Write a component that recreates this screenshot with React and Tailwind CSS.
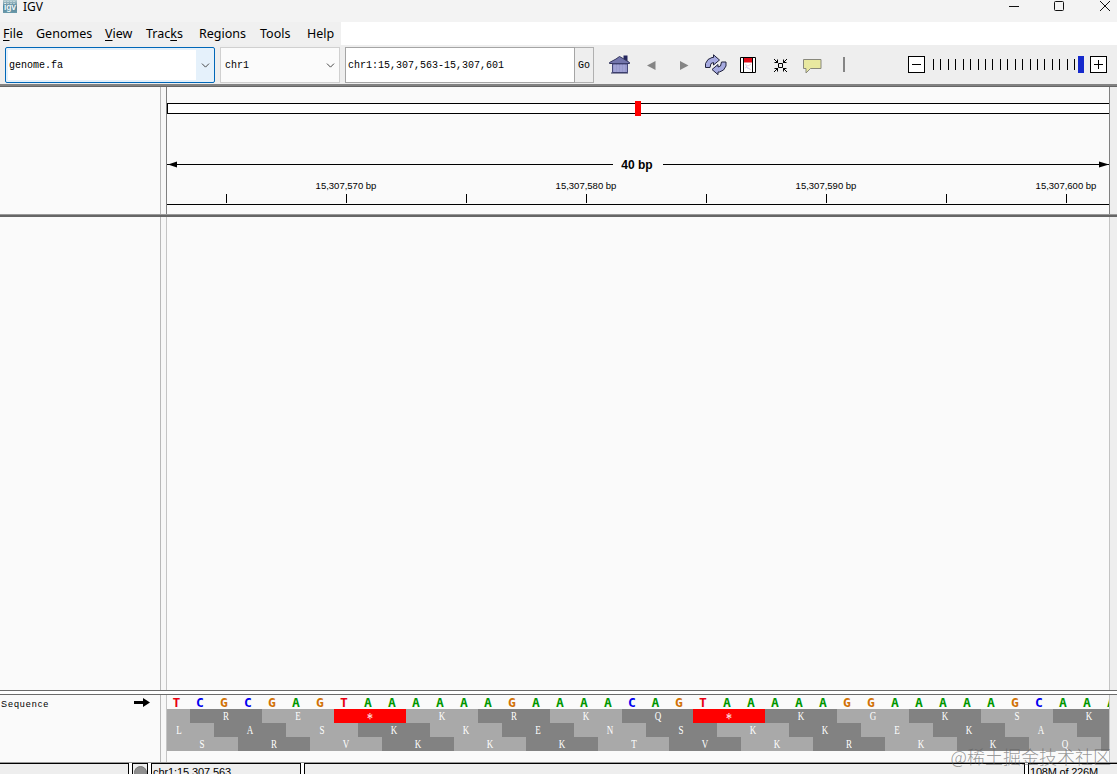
import { ChevronDown } from "lucide-react";
import clsx from "clsx";

const MENU = [
  { label: "File", key: 0, width: "w-[33px]" },
  { label: "Genomes", key: -1, width: "w-[69px]" },
  { label: "View", key: 0, width: "w-[41px]" },
  { label: "Tracks", key: 4, width: "w-[53px]" },
  { label: "Regions", key: -1, width: "w-[61px]" },
  { label: "Tools", key: -1, width: "w-[47px]" },
  { label: "Help", key: -1, width: "w-[34px]" },
];

const BASES = "TCGCGAGTAAAAAAGAAAACAGTAAAAAGGAAAAAGCAAA".split("");

const BASE_COLORS = {
  A: "text-[#009600]",
  C: "text-[#0000f0]",
  G: "text-[#d17105]",
  T: "text-[#e80010]",
};

// One entry per reading frame, `start` is the base index of the first codon
const FRAMES = [
  { start: -2, codons: " RE*KRKQ*KGKSK", shades: "LDLRLDLDRDLDLD" },
  { start: -1, codons: "LASKKENSKKEKA ", shades: "LDLDLDLDLDLDLD" },
  { start: 0, codons: "SRVKKKTVKRKKQ ", shades: "LDLDLDLDLDLDLD" },
];

const SHADES = {
  L: "bg-[#a9a9a9]",
  D: "bg-[#828282]",
  R: "bg-[#ff0000]",
};

const BASE_WIDTH = 23.96;
const TRACK_WIDTH = 942;

// Left edge of a base inside the data panel
function baseX(i) {
  const x = Math.round(i * BASE_WIDTH - 0.7);
  return Math.min(TRACK_WIDTH, Math.max(0, x));
}

function TitleBar() {
  return (
    <div className="flex h-[22px] items-start bg-[#f3f3f3]">
      <svg className="ml-[3px] shrink-0" width="14" height="13" viewBox="0 0 14 13">
        <defs>
          <linearGradient id="logo" x1="0" y1="0" x2="0" y2="1">
            <stop offset="0" stopColor="#b3ccd1" />
            <stop offset="0.5" stopColor="#548399" />
            <stop offset="1" stopColor="#6b9aaa" />
          </linearGradient>
        </defs>
        <rect width="14" height="13" fill="url(#logo)" />
        <path d="M1 1.5h12M1 3.5h12" stroke="#d8e6e7" strokeWidth=".6" strokeDasharray="2 1" />
        <text x="1" y="10" fontSize="8.5" fontWeight="bold" textLength="12" fontFamily="Liberation Sans, sans-serif" fill="#f0f8f8">
          igv
        </text>
      </svg>
      <span className="ml-[6px] text-[12px] leading-[14px] text-black">IGV</span>
      <div className="ml-auto flex">
        <svg width="108" height="14" viewBox="0 0 108 14" fill="none" stroke="#111" strokeWidth="1">
          <path d="M0 6.5h10" />
          <rect x="45.5" y="1.5" width="9" height="9" rx="1" />
          <path d="M91 1l10 10M101 1l-10 10" />
        </svg>
      </div>
    </div>
  );
}

function MenuBar() {
  return (
    <div className="flex h-[23px] bg-white">
      <div className="flex w-[341px] items-center bg-[#f0f0f0] pt-px pl-[3px] text-[12.5px] leading-[18px] text-black">
        {MENU.map(({ label, key, width }) => (
          <span key={label} className={clsx("shrink-0 whitespace-nowrap", width)}>
            {label.split("").map((ch, i) => (
              <span
                key={i}
                className={i === key ? "underline decoration-1 underline-offset-[2px]" : undefined}
              >
                {ch}
              </span>
            ))}
          </span>
        ))}
      </div>
    </div>
  );
}

function ToolIcon({ children }) {
  return (
    <svg className="shrink-0" width="32" height="22" viewBox="0 0 32 22" fill="none">
      {children}
    </svg>
  );
}

function ToolButtons() {
  return (
    <div className="ml-[10px] flex items-center">
      <ToolIcon>
        {/* home */}
        <path d="M19.500 1.500h4v6h-4z" fill="#25265f" />
        <path d="M5.500 8.500L12 5L15.500 2.500L19 4.500L25.500 8.500V9.500H5.500z" fill="#7375ac" stroke="#34365e" />
        <path d="M8.500 10h15v8.500h-15z" fill="#9799cc" stroke="#45477a" />
        <path d="M11 10.500v7.500M14 10.500v7.500M17 10.500v7.500M20 10.500v7.500" stroke="#b4b6e2" strokeWidth=".7" />
        <path d="M7 19h17" stroke="#34365e" />
      </ToolIcon>
      <ToolIcon>
        <path d="M11 11.500l8.500-4.500v9z" fill="#858585" />
      </ToolIcon>
      <ToolIcon>
        <path d="M20.500 11.500l-8.500-4.500v9z" fill="#858585" />
      </ToolIcon>
      <ToolIcon>
        {/* refresh */}
        <g fill="#a6aae0" stroke="#22243f" strokeLinejoin="miter">
          <path d="M5.500 13.500V9.500L8 5.500L12 3.500H13.500V.800L19.500 6L13.500 11V8.500L11 9.500L10 13.500z" />
          <path d="M26 8V12L23.500 16L19.500 18H18V20.700L12 15.500L18 10.500V13L20.500 12L21.500 8z" />
        </g>
      </ToolIcon>
      <ToolIcon>
        {/* region of interest */}
        <path d="M8.500 3.500h15v15h-15z" fill="white" stroke="black" />
        <path d="M11.500 4v14M20.500 4v14" stroke="black" />
        <path d="M12 4h8v4.500h-8z" fill="#e10b18" />
        <path d="M13 10l3 2l3-2M13 14l2-1l4 3" stroke="#f3cbd4" />
        <path d="M14 11l1 3l3 1" stroke="#cfd2f2" />
      </ToolIcon>
      <ToolIcon>
        {/* fit to window */}
        <path d="M14.500 9.500h4v4h-4z" stroke="black" />
        <path
          d="M10 5l4 4M23 5l-4 4M10 18l4-4M23 18l-4-4M13.500 5.500v3h-3M19.500 5.500v3h3M13.500 17.500v-3h-3M19.500 17.500v-3h3"
          stroke="black"
        />
      </ToolIcon>
      <ToolIcon>
        {/* tooltip balloon */}
        <path d="M7.500 5.500h17.500v9h-10.500l-4.500 4.500v-4.500h-2.500z" fill="#e8e8a0" stroke="#88887c" />
      </ToolIcon>
      <ToolIcon>
        <path d="M16 3v15" stroke="#858585" strokeWidth="2" />
      </ToolIcon>
    </div>
  );
}

function ZoomControl() {
  return (
    <div className="ml-[48px] flex items-center">
      <svg width="200" height="18" viewBox="0 0 200 18" fill="none" stroke="black" shapeRendering="crispEdges">
        <rect x="0.5" y="0.5" width="16" height="16" fill="white" />
        <path d="M4 8.500h9" />
        {Array.from({ length: 20 }, (_, i) => {
          const x = Math.round(25 + i * 7.43) + 0.5;
          return <path key={i} d={`M${x} 3v11`} />;
        })}
        <rect x="170" y="0" width="6" height="17" fill="#1529cc" stroke="none" />
        <rect x="182.5" y="0.5" width="16" height="16" fill="white" />
        <path d="M186 8.500h9M190.500 4v9" />
      </svg>
    </div>
  );
}

function Toolbar() {
  return (
    <div className="flex h-[39px] items-start bg-[#eeeeee] pt-[2px] pl-[5px] font-['Liberation_Mono',monospace] text-[10px] text-black">
      <div className="flex h-[36px] w-[210px] shrink-0 rounded-[2px] border border-[#0067b8] bg-[#e5f1fb] p-[2px] pr-0">
        <div className="flex flex-1 items-center bg-white pl-px">genome.fa</div>
        <div className="flex w-[18px] items-center justify-center">
          <ChevronDown size={13} strokeWidth={1.8} className="text-[#444]" />
        </div>
      </div>
      <div className="ml-[5px] flex h-[36px] w-[120px] shrink-0 items-center justify-between border border-[#d0d0d0] bg-[#fbfbfb] pr-[2px] pl-[4px]">
        chr1
        <ChevronDown size={13} strokeWidth={1.8} className="text-[#444]" />
      </div>
      <div className="ml-[5px] flex h-[36px] w-[230px] shrink-0 items-center border border-[#a5a5a5] bg-white pl-[2px]">
        chr1:15,307,563-15,307,601
      </div>
      <div className="flex h-[36px] w-[19px] shrink-0 items-center justify-center border border-l-0 border-[#b0b0b0] bg-[#eeeeee]">
        Go
      </div>
      <div className="flex h-[36px] items-center">
        <ToolButtons />
        <ZoomControl />
      </div>
    </div>
  );
}

// Name column, splitter, data column and the scrollbar gutter
function PanelRow({ className, name, children }) {
  return (
    <div className={clsx("flex bg-[#fafafa]", className)}>
      <div className="w-[161px] shrink-0 border-r border-[#b8b8b8]">{name}</div>
      <div className="w-[5px] shrink-0 bg-[#f7f7f7]" />
      {children}
      <div className="flex-1 bg-[#eeeeee]" />
    </div>
  );
}

function RangeBar() {
  return (
    <div className="flex h-[16px] items-center">
      <svg width="446" height="7" viewBox="0 0 446 7">
        <path d="M0 3h446v1H0z" />
        <path d="M1 3.500L10 0.500v6z" />
      </svg>
      <span className="w-[50px] pt-px pr-[2px] text-center text-[12px] leading-[16px] font-bold">
        40 bp
      </span>
      <svg width="446" height="7" viewBox="0 0 446 7">
        <path d="M0 3h446v1H0z" />
        <path d="M446 3.500L436 0.500v6z" />
      </svg>
    </div>
  );
}

function Ruler() {
  return (
    <div className="w-[944px] shrink-0 overflow-hidden border-x border-[#808080] font-['Liberation_Sans',sans-serif] text-black">
      <div className="relative mt-[16px] h-[11px] border border-r-0 border-black bg-white">
        <div className="absolute -top-[3px] left-[467px] h-[15px] w-[6px] bg-[#ff0000]" />
      </div>
      <div className="mt-[42px]">
        <RangeBar />
      </div>
      <div className="mt-[8px] ml-[59px] flex text-[9.5px] leading-[12px]">
        {[570, 580, 590, 600].map((pos) => (
          <span key={pos} className="w-[240px] shrink-0 text-center">
            15,307,{pos} bp
          </span>
        ))}
      </div>
      <div className="mt-[2px] ml-[59px] flex h-[9px]">
        {Array.from({ length: 8 }, (_, i) => (
          <div key={i} className="w-[120px] shrink-0 border-l border-black" />
        ))}
      </div>
      <div className="mt-px h-px bg-black" />
    </div>
  );
}

function Frame({ start, codons, shades }) {
  return (
    <div className="flex h-[14px]">
      {codons.split("").map((aa, n) => {
        const first = start + n * 3;
        const left = baseX(first);
        const width = baseX(first + 3) - left;
        // The amino acid is centred on the middle base
        const pad = baseX(first + 1) - left;
        return (
          <div
            key={n}
            className={clsx("shrink-0 overflow-hidden leading-[14px]", SHADES[shades[n]])}
            style={{ width, paddingLeft: pad }}
          >
            <span
              className={clsx(
                "block w-[24px] scale-x-75 text-center text-white",
                aa === "*" && "translate-y-[3px] text-[16px]"
              )}
            >
              {aa}
            </span>
          </div>
        );
      })}
    </div>
  );
}

function SequenceTrack() {
  return (
    <div className="w-[944px] shrink-0 overflow-hidden border-x border-[#c4c4c4]">
      <div className="flex h-[14px] w-[942px] overflow-hidden font-['DejaVu_Sans_Mono',monospace] text-[13px] leading-[16px] font-bold">
        {BASES.map((base, i) => (
          <span
            key={i}
            className={clsx("shrink-0 pr-[4px] text-center", BASE_COLORS[base])}
            style={{ width: i === 39 ? 24 : baseX(i + 1) - baseX(i) }}
          >
            {base}
          </span>
        ))}
      </div>
      <div className="font-['Liberation_Serif',serif] text-[12px]">
        {FRAMES.map((frame) => (
          <Frame key={frame.start} {...frame} />
        ))}
      </div>
    </div>
  );
}

function StatusBar() {
  return (
    <div className="flex h-[11px] gap-[3px] overflow-hidden bg-white font-['Liberation_Sans',sans-serif] text-[11px] leading-[17px] text-black">
      <div className="w-[129px] shrink-0 border-t border-r border-black bg-[#eeeeee]" />
      <div className="flex w-[16px] shrink-0 justify-center overflow-hidden border-x border-t border-black bg-[#eeeeee] pt-[2px]">
        <div className="size-[13px] shrink-0 rounded-full border border-[#777] bg-[#909090]" />
      </div>
      <div className="w-[150px] shrink-0 border-x border-t border-black bg-[#eeeeee] pl-px tracking-[-0.1px]">
        chr1:15,307,563
      </div>
      <div className="w-[721px] shrink-0 border-x border-t border-black bg-[#eeeeee]" />
      <div className="flex-1 border-t border-l border-black bg-[#eeeeee] pl-px tracking-[-0.2px] whitespace-nowrap">
        108M of 226M
      </div>
    </div>
  );
}

export default function App() {
  return (
    <div className="relative flex h-[774px] w-[1117px] flex-col overflow-hidden bg-[#fafafa] font-['Noto_Sans',sans-serif]">
      <TitleBar />
      <MenuBar />
      <Toolbar />
      <div className="h-[3px] shrink-0 border-b border-[#666] bg-[#828282]" />

      <PanelRow className="h-[127px] shrink-0">
        <Ruler />
      </PanelRow>
      <div className="h-[3px] shrink-0 border-t border-[#999] bg-[#666]" />

      <PanelRow className="h-[473px] shrink-0">
        <div className="w-[944px] shrink-0 border-x border-[#c4c4c4]" />
      </PanelRow>
      <div className="h-[5px] shrink-0 border-y border-[#6b6b6b] bg-white" />

      <PanelRow
        className="h-[67px] shrink-0"
        name={
          <div className="flex justify-between pt-[2px] pr-[10px] pl-px font-['Liberation_Sans',sans-serif] text-[9px] leading-[14px] tracking-[0.95px] text-black">
            <span>Sequence</span>
            <svg className="mt-px" width="16" height="9" viewBox="0 0 16 9">
              <path d="M0 3h9V0l7 4.500l-7 4.500V6H0z" />
            </svg>
          </div>
        }
      >
        <SequenceTrack />
      </PanelRow>
      <div className="h-px shrink-0 bg-[#999]" />
      <StatusBar />

      <div className="absolute right-[6px] bottom-[6px] font-['Noto_Sans_CJK_SC',sans-serif] text-[18px] leading-[24px] font-light whitespace-nowrap text-[#606060]/65">
        @稀土掘金技术社区
      </div>
    </div>
  );
}
